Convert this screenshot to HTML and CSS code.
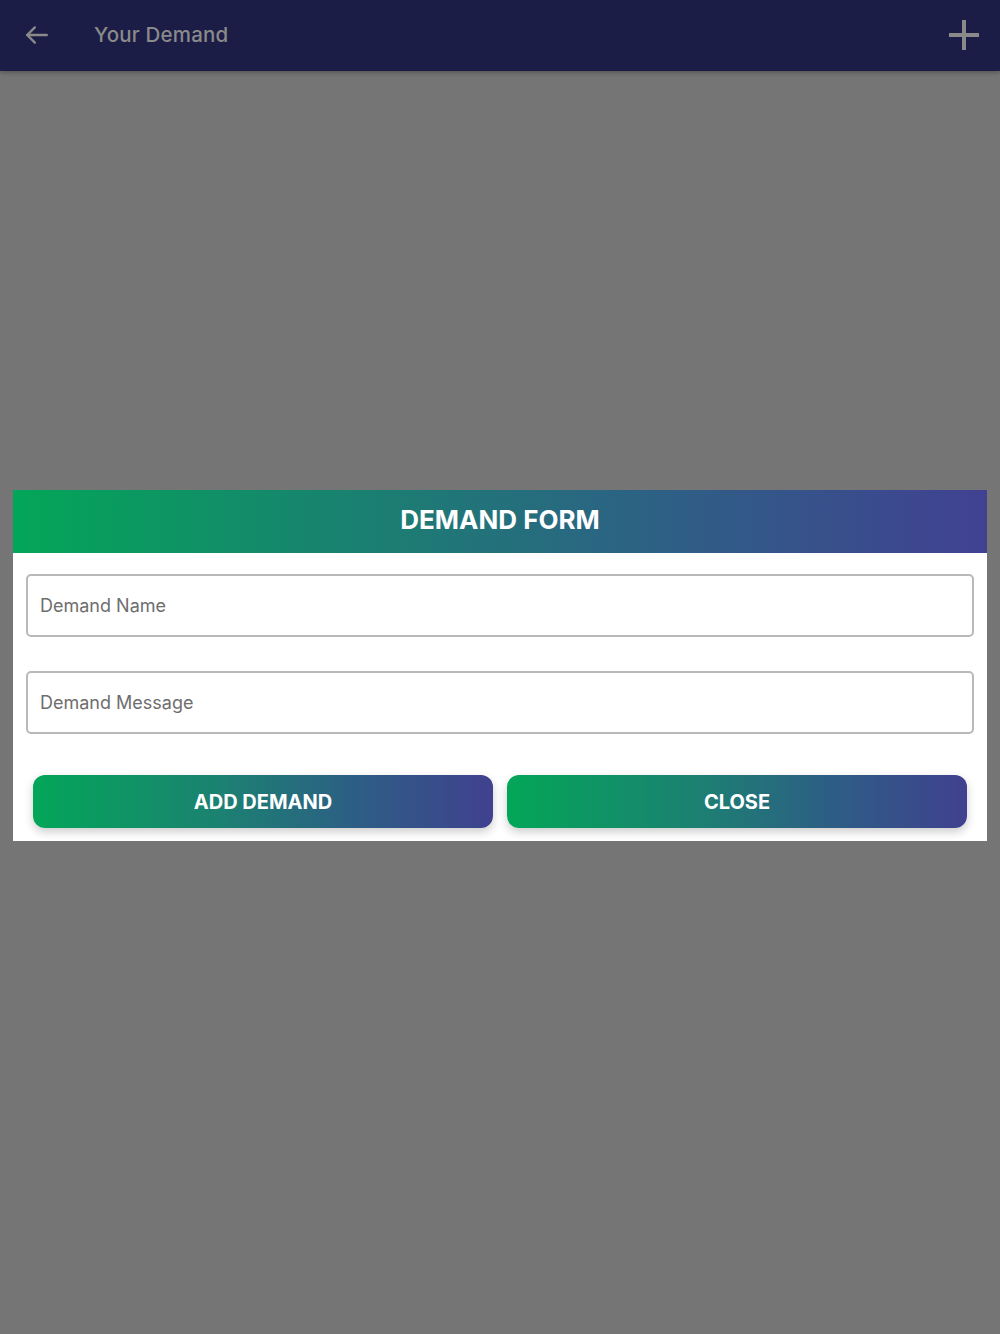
FILE: index.html
```html
<!DOCTYPE html>
<html lang="en">

<head>
    <meta charset="UTF-8">
    <meta name="viewport" content="width=device-width, initial-scale=1.0">
    <title>Your Demand</title>
    <link rel="stylesheet" href="styles.css">
</head>

<body>
    <header class="topbar">
        <button class="icon-btn back" aria-label="Back">
            <svg width="26" height="26" viewBox="0 0 24 24" fill="none" stroke="#8a8a8a" stroke-width="2.2" stroke-linecap="round" stroke-linejoin="round">
                <path d="M21 12H3"/>
                <path d="M10 5l-7 7 7 7"/>
            </svg>
        </button>
        <h1 class="title">Your Demand</h1>
        <button class="icon-btn add" aria-label="Add">
            <svg width="32" height="32" viewBox="0 0 32 32" fill="none" stroke="#8a8a8a" stroke-width="4">
                <path d="M16 1v30"/>
                <path d="M1 16h30"/>
            </svg>
        </button>
    </header>

    <main class="overlay">
        <div class="dialog">
            <div class="dialog-head">DEMAND FORM</div>
            <div class="dialog-body">
                <input class="field" type="text" placeholder="Demand Name">
                <input class="field" type="text" placeholder="Demand Message">
                <div class="actions">
                    <button class="grad-btn">ADD DEMAND</button>
                    <button class="grad-btn">CLOSE</button>
                </div>
            </div>
        </div>
    </main>
</body>

</html>
```

FILE: styles.css
```css
html, body {
  margin: 0;
  height: 100%;
}
body {
  font-family: Inter, 'Liberation Sans', Arial, sans-serif;
  background-color: #757575;
  display: flex;
  flex-direction: column;
}
.topbar {
  height: 71px;
  background-color: #1c1d46;
  display: flex;
  align-items: center;
  padding: 0 20px 2px 24px;
  box-sizing: border-box;
  box-shadow: 0 2px 4px rgba(0, 0, 0, 0.25);
  position: relative;
  z-index: 1;
}
.icon-btn {
  background: none;
  border: none;
  padding: 0;
  display: flex;
  align-items: center;
  cursor: pointer;
}
.title {
  margin: 0 0 0 44px;
  font-size: 20.5px;
  font-weight: 500;
  letter-spacing: 0.2px;
  color: #8a8a8a;
  flex: 1;
}
.overlay {
  flex: 1;
  display: flex;
  flex-direction: column;
  padding: 0 13px;
}
.dialog {
  margin-top: 419px;
  background-color: #fff;
}
.dialog-head {
  height: 63px;
  box-sizing: border-box;
  padding-bottom: 4px;
  display: flex;
  align-items: center;
  justify-content: center;
  color: #fff;
  font-size: 26px;
  font-weight: 700;
  background: linear-gradient(to right, #03a658, #2a6682 60%, #414192);
}
.dialog-body {
  padding: 21px 13px 13px;
  display: flex;
  flex-direction: column;
}
.field {
  height: 63px;
  box-sizing: border-box;
  border: 2px solid #b9b9b9;
  border-radius: 5px;
  padding: 0 12px;
  font-family: inherit;
  font-size: 18px;
  color: #333;
  margin-bottom: 34px;
}
.field::placeholder {
  color: #6e6e6e;
}
.field + .field {
  margin-bottom: 41px;
}
.actions {
  display: flex;
  gap: 14px;
  padding: 0 7px;
}
.grad-btn {
  flex: 1;
  height: 53px;
  border: none;
  border-radius: 12px;
  color: #fff;
  font-family: inherit;
  font-size: 20px;
  font-weight: 700;
  background: linear-gradient(to right, #03a658, #1b8271 40%, #2d5e85 70%, #40418f);
  box-shadow: 0 4px 10px rgba(0, 0, 0, 0.2);
  cursor: pointer;
}
```
